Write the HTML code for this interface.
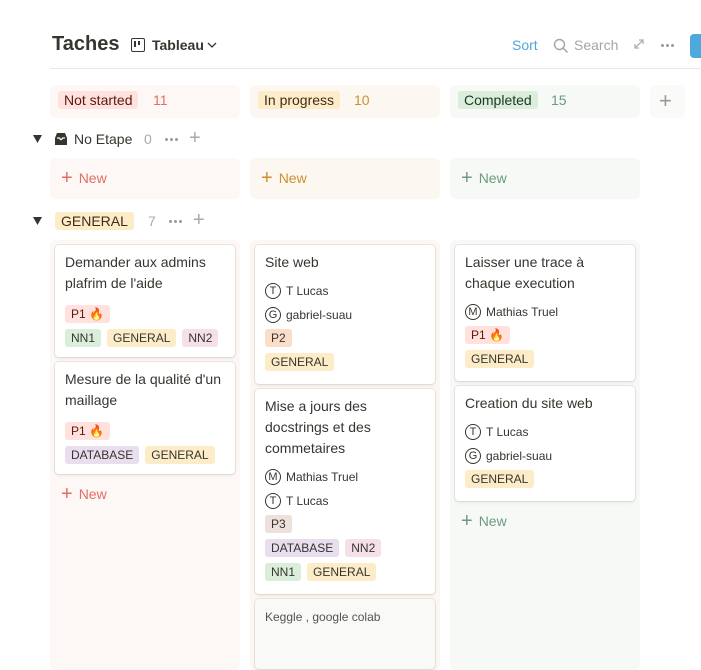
<!DOCTYPE html><html><head><meta charset="utf-8"><style>
*{box-sizing:border-box;margin:0;padding:0}
body{width:701px;height:658px;overflow:hidden;background:#fff;font-family:"Liberation Sans",sans-serif;color:#37352f;position:relative}
.a{position:absolute}
.col{position:absolute;border-radius:6px}
.card{position:absolute;background:#fff;border-radius:4px;box-shadow:0 0 0 1px rgba(15,15,15,.08),0 2px 3px rgba(15,15,15,.06);padding:7px 10px 0 10px}
.t{font-size:14px;line-height:21px;color:#37352f;margin-bottom:11px}
.p{font-size:12px;line-height:24px;display:flex;align-items:center;gap:5px;color:#37352f}
.ic{width:16px;height:16px;border:1.3px solid #37352f;border-radius:50%;font-size:11px;line-height:14px;text-align:center;display:inline-block}
.tags{display:flex;gap:6px;margin-bottom:6px}
.tg{font-size:12px;line-height:18px;padding:0 6px;border-radius:3px;color:#37352f}
.y{background:#fdecc8}.g{background:#dbeddb}.pk{background:#f5e0e9}.pu{background:#e8deee}.r{background:#ffe2dd}.o{background:#fadec9}.br{background:#eee0da}
.new{position:absolute;font-size:14px;display:flex;align-items:center;gap:6px}
.plus{font-size:20px;font-weight:300;line-height:14px}
.dots{position:absolute;display:flex;gap:2px}.dots i{width:3px;height:3px;border-radius:50%;background:#9b9a97;display:block}
</style></head><body>
<div class="a" style="left:52px;top:33px;font-size:20px;font-weight:bold;color:#37352f">Taches</div>
<div class="a" style="left:131px;top:38px;width:14px;height:14px;border:1.6px solid #37352f;border-radius:2px"><div style="position:absolute;left:2px;top:2px;width:2px;height:6px;background:#37352f"></div><div style="position:absolute;left:5.5px;top:2px;width:2px;height:4px;background:#37352f"></div></div>
<div class="a" style="left:152px;top:37px;font-size:14px;font-weight:bold">Tableau</div>
<svg class="a" style="left:207px;top:41px" width="10" height="8"><path d="M1 2l4 4 4-4" stroke="#37352f" stroke-width="1.3" fill="none"/></svg>
<div class="a" style="left:512px;top:37px;font-size:14px;color:#4ba9dc">Sort</div>
<svg class="a" style="left:553px;top:38px" width="16" height="16"><circle cx="6.5" cy="6.5" r="5" stroke="#a5a5a3" stroke-width="1.4" fill="none"/><path d="M10 10l4.5 4.5" stroke="#a5a5a3" stroke-width="1.5"/></svg>
<div class="a" style="left:574px;top:37px;font-size:14px;color:#a5a5a3">Search</div>
<svg class="a" style="left:633px;top:38px" width="12" height="12"><path d="M2 10L10 2M6 2h4v4M2 6v4h4" stroke="#b0b0ae" stroke-width="1.3" fill="none"/></svg>
<div class="dots" style="left:661px;top:44px"><i></i><i></i><i></i></div>
<div class="a" style="left:690px;top:34px;width:20px;height:24px;background:#4ba9dc;border-radius:4px"></div>
<div class="a" style="left:50px;top:68px;width:651px;height:1px;background:#e9e9e7"></div>

<div class="col" style="left:50px;top:85px;width:190px;height:33px;background:#fdf7f5"></div>
<div class="col" style="left:250px;top:85px;width:190px;height:33px;background:#fcf8f1"></div>
<div class="col" style="left:450px;top:85px;width:190px;height:33px;background:#f7f9f6"></div>
<div class="col" style="left:650px;top:85px;width:35px;height:33px;background:#fafaf9"></div>
<div class="a tg" style="left:58px;top:91px;font-size:14px;line-height:18px;background:#ffe2dd;color:#5d1715">Not started</div>
<div class="a" style="left:153px;top:92px;font-size:14px;color:#e16f64">11</div>
<div class="a tg" style="left:258px;top:91px;font-size:14px;line-height:18px;background:#fdecc8;color:#402c1b">In progress</div>
<div class="a" style="left:354px;top:92px;font-size:14px;color:#cb912f">10</div>
<div class="a tg" style="left:458px;top:91px;font-size:14px;line-height:18px;background:#dbeddb;color:#1c3829">Completed</div>
<div class="a" style="left:551px;top:92px;font-size:14px;color:#6c9b7d">15</div>
<div class="a" style="left:659px;top:88px;font-size:22px;color:#999;font-weight:300">+</div>

<svg class="a" style="left:33px;top:135px" width="9" height="8"><path d="M0 0h9L4.5 8z" fill="#37352f"/></svg>
<svg class="a" style="left:54px;top:132px" width="14" height="14"><path d="M1 6L3 1h8l2 5v7H1z" fill="#37352f"/><path d="M3 6h2.5l1 1.5h1L8.5 6H11" stroke="#fff" stroke-width="1.2" fill="none"/></svg>
<div class="a" style="left:74px;top:131px;font-size:14px">No Etape</div>
<div class="a" style="left:144px;top:131px;font-size:14px;color:#aaa">0</div>
<div class="dots" style="left:165px;top:138px"><i></i><i></i><i></i></div>
<div class="a" style="left:189px;top:127px;font-size:20px;color:#aaa;font-weight:300">+</div>

<div class="col" style="left:50px;top:158px;width:190px;height:41px;background:#fdf7f5"></div>
<div class="col" style="left:250px;top:158px;width:190px;height:41px;background:#fcf8f1"></div>
<div class="col" style="left:450px;top:158px;width:190px;height:41px;background:#f7f9f6"></div>
<div class="new" style="left:61px;top:170px;color:#e16f64"><span class="plus">+</span>New</div>
<div class="new" style="left:261px;top:170px;color:#cb912f"><span class="plus">+</span>New</div>
<div class="new" style="left:461px;top:170px;color:#6c9b7d"><span class="plus">+</span>New</div>

<svg class="a" style="left:33px;top:217px" width="9" height="8"><path d="M0 0h9L4.5 8z" fill="#37352f"/></svg>
<div class="a tg" style="left:55px;top:212px;font-size:14px;line-height:18px;background:#fdecc8;color:#402c1b">GENERAL</div>
<div class="a" style="left:148px;top:213px;font-size:14px;color:#aaa">7</div>
<div class="dots" style="left:169px;top:220px"><i></i><i></i><i></i></div>
<div class="a" style="left:193px;top:209px;font-size:20px;color:#aaa;font-weight:300">+</div>

<div class="col" style="left:50px;top:240px;width:190px;height:430px;background:#fdf7f5"></div>
<div class="col" style="left:250px;top:240px;width:190px;height:430px;background:#fcf8f1"></div>
<div class="col" style="left:450px;top:240px;width:190px;height:430px;background:#f7f9f6"></div>

<div class="card" style="left:55px;top:245px;width:180px;height:112px"><div class="t">Demander aux admins plafrim de l'aide</div>
<div class="tags"><span class="tg r" style="color:#5d1715">P1 🔥</span></div>
<div class="tags"><span class="tg g">NN1</span><span class="tg y">GENERAL</span><span class="tg pk">NN2</span></div></div>
<div class="card" style="left:55px;top:362px;width:180px;height:112px"><div class="t">Mesure de la qualité d'un maillage</div>
<div class="tags"><span class="tg r" style="color:#5d1715">P1 🔥</span></div>
<div class="tags"><span class="tg pu">DATABASE</span><span class="tg y">GENERAL</span></div></div>
<div class="new" style="left:61px;top:486px;color:#e16f64"><span class="plus">+</span>New</div>

<div class="card" style="left:255px;top:245px;width:180px;height:139px"><div class="t" style="margin-bottom:6px">Site web</div>
<div class="p"><span class="ic">T</span>T Lucas</div><div class="p"><span class="ic">G</span>gabriel-suau</div>
<div class="tags" style="margin-top:2px"><span class="tg o">P2</span></div><div class="tags"><span class="tg y">GENERAL</span></div></div>
<div class="card" style="left:255px;top:389px;width:180px;height:205px"><div class="t" style="margin-bottom:6px">Mise a jours des docstrings et des commetaires</div>
<div class="p"><span class="ic">M</span>Mathias Truel</div><div class="p"><span class="ic">T</span>T Lucas</div>
<div class="tags" style="margin-top:2px"><span class="tg br">P3</span></div>
<div class="tags"><span class="tg pu">DATABASE</span><span class="tg pk">NN2</span></div>
<div class="tags"><span class="tg g">NN1</span><span class="tg y">GENERAL</span></div></div>
<div class="card" style="left:255px;top:599px;width:180px;height:70px;background:#f9f9f8"><div style="font-size:12px;color:#55534e;margin-top:4px">Keggle , google colab</div></div>

<div class="card" style="left:455px;top:245px;width:180px;height:136px"><div class="t" style="margin-bottom:6px">Laisser une trace à chaque execution</div>
<div class="p"><span class="ic">M</span>Mathias Truel</div>
<div class="tags" style="margin-top:2px"><span class="tg r" style="color:#5d1715">P1 🔥</span></div><div class="tags"><span class="tg y">GENERAL</span></div></div>
<div class="card" style="left:455px;top:386px;width:180px;height:115px"><div class="t" style="margin-bottom:6px">Creation du site web</div>
<div class="p"><span class="ic">T</span>T Lucas</div><div class="p"><span class="ic">G</span>gabriel-suau</div>
<div class="tags" style="margin-top:2px"><span class="tg y">GENERAL</span></div></div>
<div class="new" style="left:461px;top:513px;color:#6c9b7d"><span class="plus">+</span>New</div>
</body></html>
